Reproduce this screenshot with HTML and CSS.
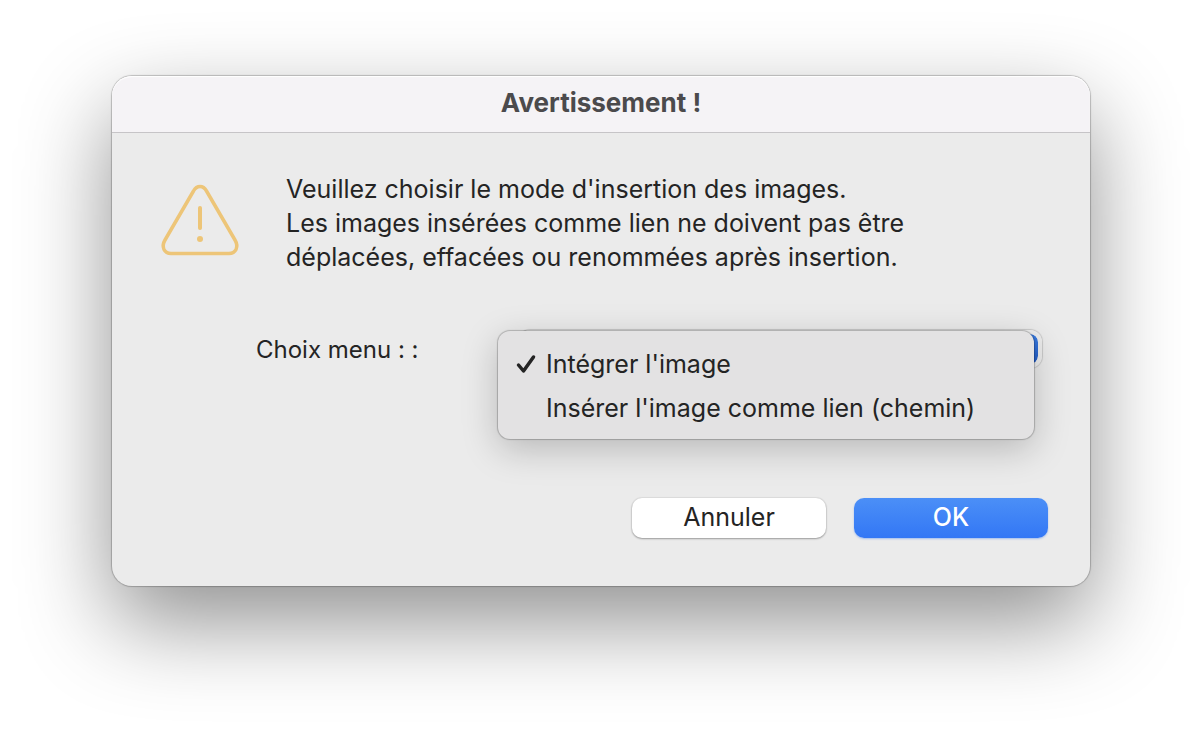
FILE: index.html
```html
<!DOCTYPE html>
<html lang="fr">
<head>
    <meta charset="UTF-8">
    <meta name="viewport" content="width=device-width, initial-scale=1.0">
    <title>Avertissement !</title>
    <link rel="stylesheet" href="styles.css">
</head>
<body>
    <form class="dialog" role="dialog" aria-labelledby="title">
        <h1 class="title" id="title">Avertissement !</h1>

        <div class="content">
            <div class="message">
                <svg class="icon" viewBox="0 0 80 74" aria-hidden="true">
                    <path d="M33.5 7 L5 56 Q2 61 4 65.5 Q6 69.500 11 69.500 H69 Q74 69.500 76 65.500 Q78 61 75 56 L46.500 7 Q44 2.500 40 2.500 Q36 2.500 33.500 7 Z"/>
                    <path class="bar" d="M40 24 V44"/>
                    <circle cx="40" cy="55" r="3"/>
                </svg>
                <p class="text">Veuillez choisir le mode d'insertion des images.<br>
                Les images insérées comme lien ne doivent pas être<br>
                déplacées, effacées ou renommées après insertion.</p>
            </div>

            <div class="choice">
                <label for="mode">Choix menu : :</label>
                <div class="picker">
                    <select id="mode">
                        <option selected>Intégrer l'image</option>
                        <option>Insérer l'image comme lien (chemin)</option>
                    </select>
                    <div class="menu" role="menu">
                        <button type="button" class="item" role="menuitemradio" aria-checked="true">
                            <svg class="check" viewBox="0 0 20 20" aria-hidden="true"><path d="M3 11 L8 17 L18 3"/></svg>
                            Intégrer l'image
                        </button>
                        <button type="button" class="item" role="menuitemradio" aria-checked="false">
                            <span class="check"></span>
                            Insérer l'image comme lien (chemin)
                        </button>
                    </div>
                </div>
            </div>

            <div class="actions">
                <button type="button" class="btn">Annuler</button>
                <button type="submit" class="btn primary">OK</button>
            </div>
        </div>
    </form>
</body>
</html>
```
FILE: styles.css
```css
* {
    box-sizing: border-box;
}
body {
    min-height: 100vh;
    margin: 0;
    padding: 76px 112px;
    background: white;
    color: #242424;
    font-family: Inter, "Liberation Sans", sans-serif;
    font-size: 25px;
    line-height: 34px;
}
button, select {
    border: none;
    color: inherit;
    font: inherit;
}
.dialog {
    border-radius: 20px;
    background: #ebebeb;
    box-shadow: 0 0 1px 1px rgba(0, 0, 0, 0.22), 0 36px 90px rgba(0, 0, 0, 0.44);
}
.title {
    margin: 0;
    padding: 10px 0 12px;
    border-bottom: 1px solid #c6c4c7;
    border-radius: 20px 20px 0 0;
    background: #f5f3f6;
    box-shadow: inset 0 1px 1px white;
    color: #4b4a4c;
    font-size: 26px;
    font-weight: 700;
    text-align: center;
}
.content {
    padding: 39px 42px 48px 48px;
}
.message {
    display: flex;
    align-items: flex-start;
    gap: 46px;
}
.icon {
    width: 80px;
    height: 74px;
    margin-top: 12px;
    fill: none;
    stroke: #edc578;
    stroke-width: 3.5;
}
.icon .bar {
    stroke-width: 4;
    stroke-linecap: round;
}
.icon circle {
    fill: #edc578;
    stroke: none;
}
.text {
    margin: 0;
}
.choice {
    display: flex;
    align-items: center;
    margin-top: 56px;
    padding-left: 96px;
}
.choice label {
    width: 242px;
    padding-top: 2px;
    font-size: 24px;
}
.picker {
    position: relative;
    flex: 1;
    margin-right: 6px;
    padding-left: 20px;
}
.picker select {
    display: block;
    width: 100%;
    height: 38px;
    padding: 0 40px 0 10px;
    border: 4px solid #ececec;
    border-radius: 12px;
    background: linear-gradient(#3b7de2, #2059c4) padding-box;
    box-shadow: 0 0 1px 1px rgba(0, 0, 0, 0.15);
    appearance: none;
}
.menu {
    position: absolute;
    top: 1px;
    left: 0;
    right: 8px;
    padding: 11px 17px 9px;
    border-radius: 12px;
    background: #e3e2e3;
    box-shadow: 0 0 1px 1px rgba(0, 0, 0, 0.22), 0 10px 36px rgba(0, 0, 0, 0.22);
}
.item {
    display: flex;
    align-items: center;
    gap: 10px;
    width: 100%;
    height: 44px;
    padding: 0;
    background: none;
    text-align: left;
    white-space: nowrap;
}
.check {
    flex: none;
    width: 21px;
    height: 20px;
    fill: none;
    stroke: #242424;
    stroke-width: 3.5;
    stroke-linecap: round;
    stroke-linejoin: round;
}
.actions {
    display: flex;
    justify-content: flex-end;
    gap: 28px;
    margin-top: 130px;
}
.btn {
    width: 194px;
    height: 40px;
    padding: 0 0 2px;
    border-radius: 10px;
    background: white;
    box-shadow: 0 0 1px 1px rgba(0, 0, 0, 0.06), 0 1px 2px rgba(0, 0, 0, 0.3);
}
.primary {
    background: linear-gradient(#4b8ff7, #3377f5);
    box-shadow: 0 1px 2px rgba(51, 119, 245, 0.4);
    color: white;
    font-weight: 500;
}
```
